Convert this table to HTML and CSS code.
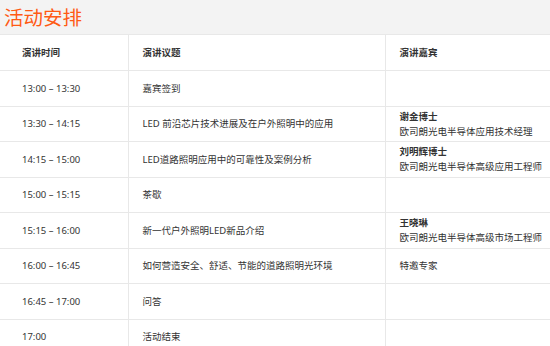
FILE: index.html
```html
<!DOCTYPE html>
<html lang="zh">
<head>
<meta charset="utf-8">
<link rel="stylesheet" href="styles.css">
</head>
<body>
<div class="page">
  <h1 class="title">活动安排</h1>
  <table class="schedule">
    <colgroup>
      <col class="c-time">
      <col class="c-topic">
      <col class="c-guest">
    </colgroup>
    <thead>
      <tr><th>演讲时间</th><th>演讲议题</th><th>演讲嘉宾</th></tr>
    </thead>
    <tbody>
      <tr><td>13:00 – 13:30</td><td>嘉宾签到</td><td></td></tr>
      <tr><td>13:30 – 14:15</td><td>LED 前沿芯片技术进展及在户外照明中的应用</td><td><b>谢金博士</b><br>欧司朗光电半导体应用技术经理</td></tr>
      <tr><td>14:15 – 15:00</td><td>LED道路照明应用中的可靠性及案例分析</td><td><b>刘明辉博士</b><br>欧司朗光电半导体高级应用工程师</td></tr>
      <tr><td>15:00 – 15:15</td><td>茶歇</td><td></td></tr>
      <tr><td>15:15 – 16:00</td><td>新一代户外照明LED新品介绍</td><td><b>王晓琳</b><br>欧司朗光电半导体高级市场工程师</td></tr>
      <tr><td>16:00 – 16:45</td><td>如何营造安全、舒适、节能的道路照明光环境</td><td>特邀专家</td></tr>
      <tr><td>16:45 – 17:00</td><td>问答</td><td></td></tr>
      <tr><td>17:00</td><td>活动结束</td><td></td></tr>
    </tbody>
  </table>
</div>
</body>
</html>
```

FILE: styles.css
```css
html, body {
  margin: 0;
  padding: 0;
  background: #f3f3f3;
}
body {
  font-family: "Noto Sans", "Noto Sans CJK SC", sans-serif;
  color: #333;
}
.page {
  width: 550px;
  overflow: hidden;
}
.title {
  margin: 0;
  height: 34px;
  padding-left: 4px;
  font-family: "Noto Sans CJK SC", sans-serif;
  font-size: 19.5px;
  font-weight: normal;
  line-height: 33px;
  color: #ff5a14;
}
.schedule {
  width: 560px;
  border-collapse: collapse;
  background: #fff;
  table-layout: fixed;
  font-size: 9.5px;
}
.c-time { width: 128px; }
.c-topic { width: 257px; }
.c-guest { width: 175px; }
.schedule th,
.schedule td {
  border: 1px solid #e8e8e8;
  height: 35.5px;
  padding: 0 0 0 14px;
  box-sizing: border-box;
  text-align: left;
  vertical-align: middle;
  line-height: 15px;
}
.schedule th {
  font-weight: bold;
  height: 36px;
}
.schedule tr > :first-child {
  border-left: none;
  padding-left: 22px;
}
.schedule td b {
  font-weight: bold;
}
```
